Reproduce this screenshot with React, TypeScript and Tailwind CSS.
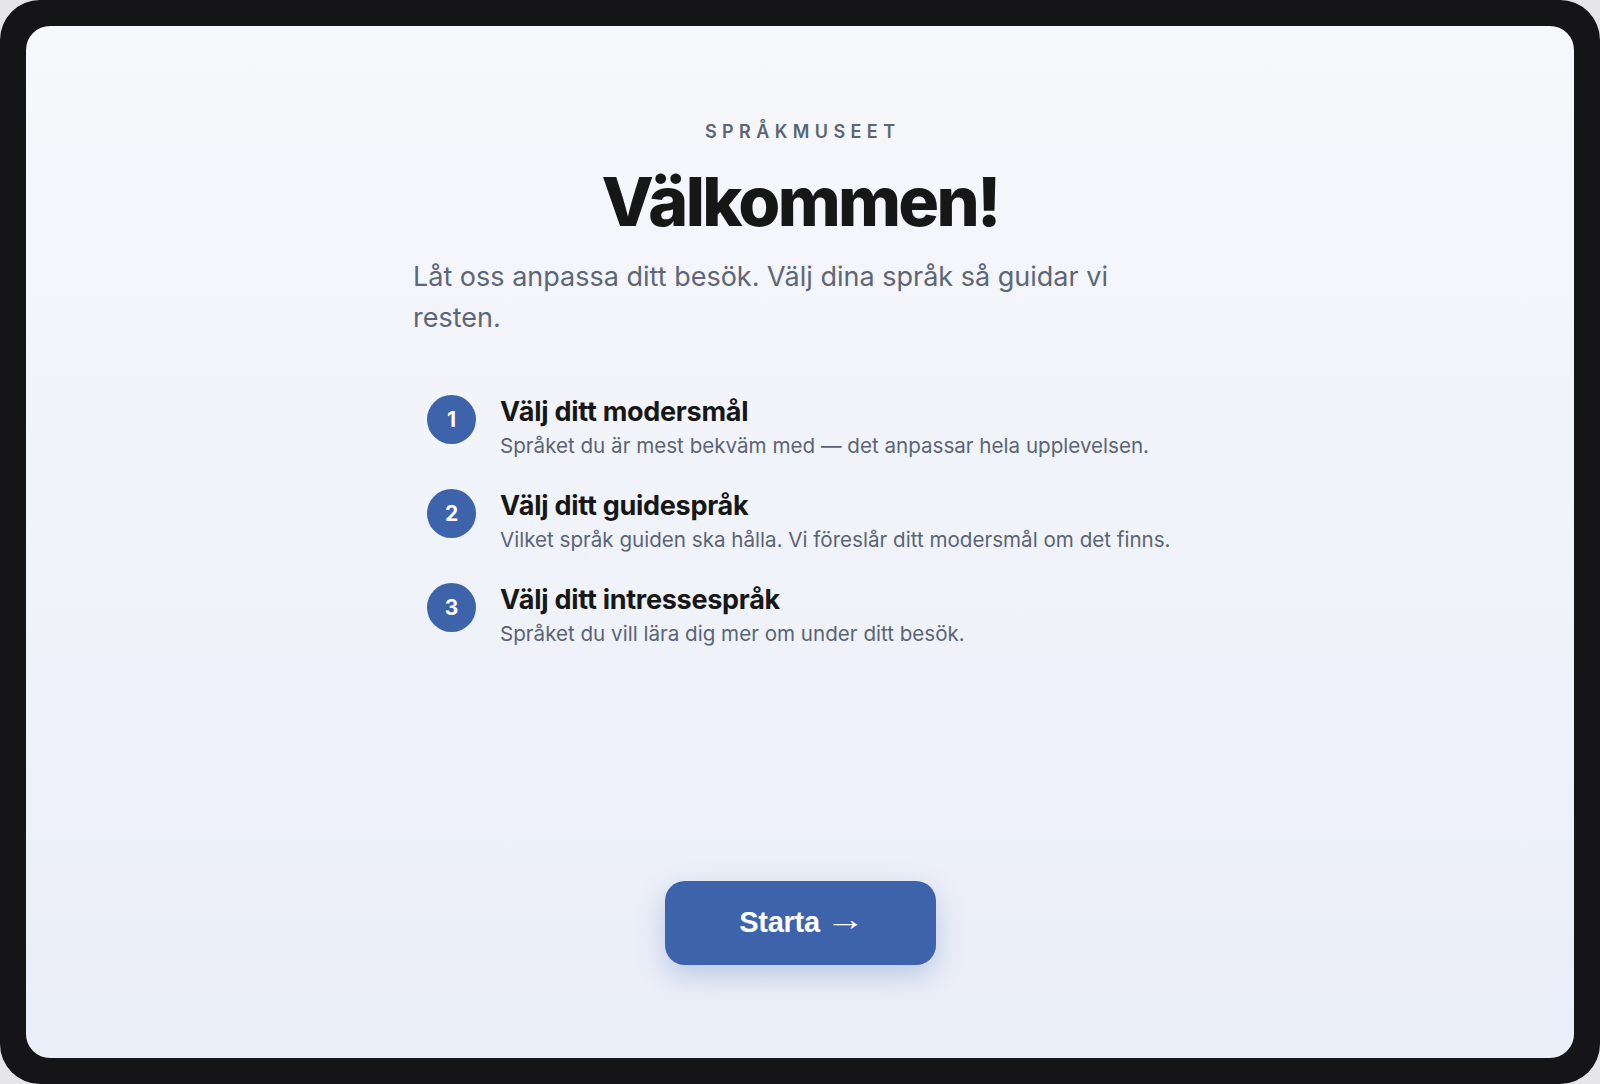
import React from "react";

const steps = [
  {
    n: 1,
    title: "Välj ditt modersmål",
    desc: "Språket du är mest bekväm med — det anpassar hela upplevelsen.",
  },
  {
    n: 2,
    title: "Välj ditt guidespråk",
    desc: "Vilket språk guiden ska hålla. Vi föreslår ditt modersmål om det finns.",
  },
  {
    n: 3,
    title: "Välj ditt intressespråk",
    desc: "Språket du vill lära dig mer om under ditt besök.",
  },
];

export default function App() {
  return (
    <div
      className="w-[1600px] h-[1084px] bg-[#e6e6e8]"
      style={{ fontFamily: "Inter, 'Noto Sans', sans-serif" }}
    >
      <div className="w-full h-full rounded-[40px] bg-[#151517] p-[26px]">
        <div className="w-full h-full rounded-[24px] bg-gradient-to-b from-[#f7f8fc] to-[#eaeef8] flex flex-col items-center">
          <div className="w-[768px] pt-[92px] flex flex-col">
            <div className="text-center text-[18px] leading-[28px] font-semibold tracking-[0.3em] text-[#5b6573] pl-[0.3em]">
              SPRÅKMUSEET
            </div>
            <h1 className="mt-[21px] text-center text-[68px] leading-[68px] font-extrabold tracking-[-0.04em] text-[#171717]">
              Välkommen!
            </h1>
            <p className="mt-[21px] -ml-[3px] text-[27px] leading-[41px] text-[#5d6677]">
              Låt oss anpassa ditt besök. Välj dina språk så guidar vi resten.
            </p>
            <ul className="mt-[57px] pl-[11px] flex flex-col gap-[29px]">
              {steps.map((s) => (
                <li key={s.n} className="flex items-start gap-[24px]">
                  <div className="w-[49px] h-[49px] shrink-0 rounded-full bg-[#3d63aa] flex items-center justify-center text-white text-[21px] font-bold">
                    {s.n}
                  </div>
                  <div className="flex flex-col">
                    <div className="text-[27px] leading-[33px] font-bold tracking-[-0.01em] text-[#171717]">
                      {s.title}
                    </div>
                    <div className="mt-[4px] text-[20.6px] leading-[28px] text-[#5b6474]">
                      {s.desc}
                    </div>
                  </div>
                </li>
              ))}
            </ul>
          </div>
          <div className="flex-1" />
          <button
            className="mb-[93px] w-[271px] h-[84px] rounded-[20px] bg-[#3d63aa] text-white text-[29px] font-bold shadow-[0_10px_28px_rgba(61,99,170,0.28)] flex items-center justify-center gap-[9px]"
            style={{ fontFamily: "'Liberation Sans', Arial, sans-serif" }}
          >
            <span className="tracking-[-0.01em]">Starta</span>
            <span className="inline-block font-normal text-[32px] leading-none -translate-y-[4px] scale-x-125">
              →
            </span>
          </button>
        </div>
      </div>
    </div>
  );
}
